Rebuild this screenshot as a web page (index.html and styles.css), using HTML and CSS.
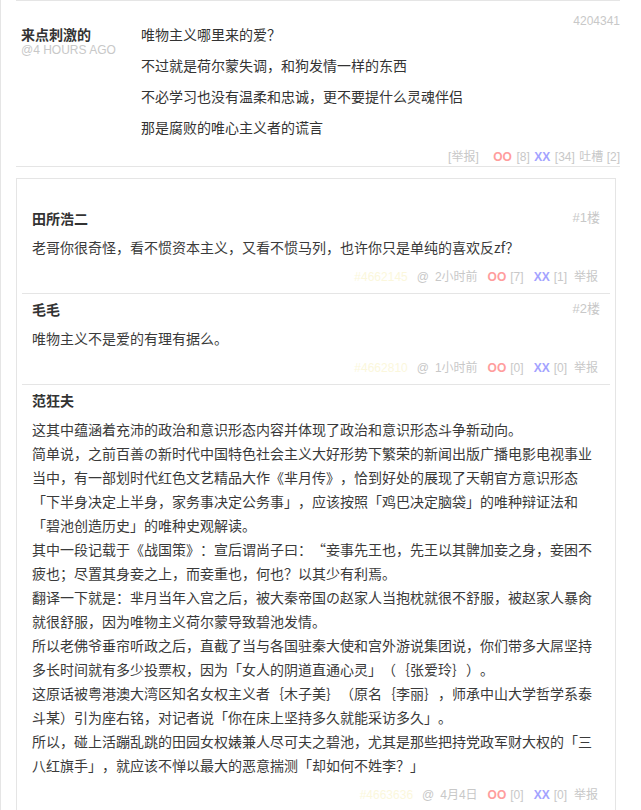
FILE: index.html
```html
<!DOCTYPE html>
<html lang="zh-CN">
<head>
    <meta charset="UTF-8">
    <meta name="viewport" content="width=device-width, initial-scale=1.0">
    <title>吐槽</title>
    <link rel="stylesheet" href="styles.css">
</head>
<body>

    <div class="page">
        <ol class="commentlist">
            <li class="post">
                <div class="post-body">
                    <div class="post-top"><span class="post-id">4204341</span></div>
                    <div class="post-main">
                        <div class="author">
                            <strong>来点刺激的</strong>
                            <small>@4 HOURS AGO</small>
                        </div>
                        <div class="text">
                            <p>唯物主义哪里来的爱？</p>
                            <p>不过就是荷尔蒙失调，和狗发情一样的东西</p>
                            <p>不必学习也没有温柔和忠诚，更不要提什么灵魂伴侣</p>
                            <p>那是腐败的唯心主义者的谎言</p>
                        </div>
                    </div>
                    <div class="vote">
                        <span class="report">[举报]</span>
                        <span class="oo">OO</span>
                        <span>[8]</span>
                        <span class="xx">XX</span>
                        <span>[34]</span>
                        <span>吐槽 [2]</span>
                    </div>
                </div>

                <div class="tucao">
                    <div class="tucao-item">
                        <div class="tucao-head">
                            <strong>田所浩二</strong>
                            <span class="floor">#1楼</span>
                        </div>
                        <div class="tucao-text">老哥你很奇怪，看不惯资本主义，又看不惯马列，也许你只是单纯的喜欢反zf？</div>
                        <div class="tucao-foot">
                            <span class="tid">#4662145</span>
                            <span class="at">@</span>
                            <span class="time">2小时前</span>
                            <span class="oo">OO</span>
                            <span class="num">[7]</span>
                            <span class="xx">XX</span>
                            <span class="num2">[1]</span>
                            <span>举报</span>
                        </div>
                    </div>

                    <div class="tucao-item">
                        <div class="tucao-head">
                            <strong>毛毛</strong>
                            <span class="floor">#2楼</span>
                        </div>
                        <div class="tucao-text">唯物主义不是爱的有理有据么。</div>
                        <div class="tucao-foot">
                            <span class="tid">#4662810</span>
                            <span class="at">@</span>
                            <span class="time">1小时前</span>
                            <span class="oo">OO</span>
                            <span class="num">[0]</span>
                            <span class="xx">XX</span>
                            <span class="num2">[0]</span>
                            <span>举报</span>
                        </div>
                    </div>

                    <div class="tucao-item">
                        <div class="tucao-head">
                            <strong>范狂夫</strong>
                        </div>
                        <div class="tucao-text">这其中蕴涵着充沛的政治和意识形态内容并体现了政治和意识形态斗争新动向。<br>简单说，之前百善の新时代中国特色社会主义大好形势下繁荣的新闻出版广播电影电视事业<br>当中，有一部划时代红色文艺精品大作《芈月传》，恰到好处的展现了天朝官方意识形态<br>「下半身决定上半身，家务事决定公务事」，应该按照「鸡巴决定脑袋」的唯种辩证法和<br>「碧池创造历史」的唯种史观解读。<br>其中一段记载于《战国策》：宣后谓尚子曰：<span class="fw">“</span>妾事先王也，先王以其髀加妾之身，妾困不<br>疲也；尽置其身妾之上，而妾重也，何也？以其少有利焉。<br>翻译一下就是：芈月当年入宫之后，被大秦帝国の赵家人当抱枕就很不舒服，被赵家人暴肏<br>就很舒服，因为唯物主义荷尔蒙导致碧池发情。<br>所以老佛爷垂帘听政之后，直截了当与各国驻秦大使和宫外游说集团说，你们带多大屌坚持<br>多长时间就有多少投票权，因为「女人的阴道直通心灵」（｛张爱玲｝）。<br>这原话被粤港澳大湾区知名女权主义者｛木子美｝（原名｛李丽｝，师承中山大学哲学系泰<br>斗某）引为座右铭，对记者说「你在床上坚持多久就能采访多久」。<br>所以，碰上活蹦乱跳的田园女权婊兼人尽可夫之碧池，尤其是那些把持党政军财大权的「三<br>八红旗手」，就应该不惮以最大的恶意揣测「却如何不姓李？」</div>
                        <div class="tucao-foot">
                            <span class="tid">#4663636</span>
                            <span class="at">@</span>
                            <span class="time">4月4日</span>
                            <span class="oo">OO</span>
                            <span class="num">[0]</span>
                            <span class="xx">XX</span>
                            <span class="num2">[0]</span>
                            <span>举报</span>
                        </div>
                    </div>
                </div>
            </li>
        </ol>
    </div>

</body>
</html>
```

FILE: styles.css
```css
body {
    margin: 0;
    background: #fff;
    color: #333;
    font-family: 'Noto Sans CJK SC', sans-serif;
    font-size: 14px;
    text-spacing-trim: space-all;
}

.page {
    border-left: 1px solid #e5e5e5;
    padding: 0 21px 0 15px;
    min-height: 810px;
    box-sizing: border-box;
}

.commentlist {
    list-style: none;
    margin: 0;
    padding: 0;
    border-top: 1px solid #e5e5e5;
}

.post-body {
    border-bottom: 1px solid #e5e5e5;
    padding-bottom: 2px;
}

.post-top {
    padding-top: 11px;
    text-align: right;
    line-height: 14px;
    height: 14px;
}

.post-id {
    font-family: 'Liberation Sans', sans-serif;
    font-size: 12px;
    color: #c8c8c8;
}

.post-main {
    display: flex;
    padding-left: 5px;
}

.author {
    width: 120px;
    flex-shrink: 0;
}

.author strong {
    display: block;
    line-height: 16px;
    color: #333;
}

.author small {
    display: block;
    font-family: 'Liberation Sans', sans-serif;
    font-size: 12px;
    line-height: 16px;
    color: #c8c8c8;
}

.text {
    flex: 1;
}

.text p {
    margin: 0 0 15px;
    line-height: 16px;
}

.vote {
    display: flex;
    justify-content: flex-end;
    gap: 4.5px;
    font-family: 'Liberation Sans', 'Noto Sans CJK SC', sans-serif;
    font-size: 12px;
    line-height: 14px;
    color: #c8c8c8;
}

.vote .report {
    margin-right: 10px;
}

.oo {
    font-weight: bold;
    color: #ff9d9d;
}

.xx {
    font-weight: bold;
    color: #a3a3ff;
}

.tucao {
    margin: 11px 4px 0 0;
    border: 1px solid #e5e5e5;
    padding: 24px 5px 0;
}

.tucao-item {
    padding: 5px 10px 6px;
    border-bottom: 1px solid #e5e5e5;
}

.tucao-head {
    display: flex;
    justify-content: space-between;
    align-items: center;
    line-height: 20px;
}

.tucao-head strong {
    color: #333;
}

.floor {
    font-family: 'Liberation Sans', 'Noto Sans CJK SC', sans-serif;
    font-size: 13px;
    color: #c8c8c8;
}

.tucao-text {
    margin-top: 7px;
    line-height: 24px;
    color: #3a3a3a;
}

.fw {
    font-feature-settings: "fwid";
}

.tucao-foot {
    display: flex;
    justify-content: flex-end;
    margin-top: 8px;
    padding-right: 2px;
    font-family: 'Liberation Sans', 'Noto Sans CJK SC', sans-serif;
    font-size: 12px;
    line-height: 20px;
    color: #c8c8c8;
}

.tucao-foot .tid {
    color: #fbf7dc;
    margin-right: 9px;
}

.tucao-foot .at {
    margin-right: 6px;
}

.tucao-foot .time {
    margin-right: 10px;
}

.tucao-foot .oo,
.tucao-foot .xx {
    margin-right: 4px;
}

.tucao-foot .num {
    margin-right: 10px;
}

.tucao-foot .num2 {
    margin-right: 7px;
}
```
